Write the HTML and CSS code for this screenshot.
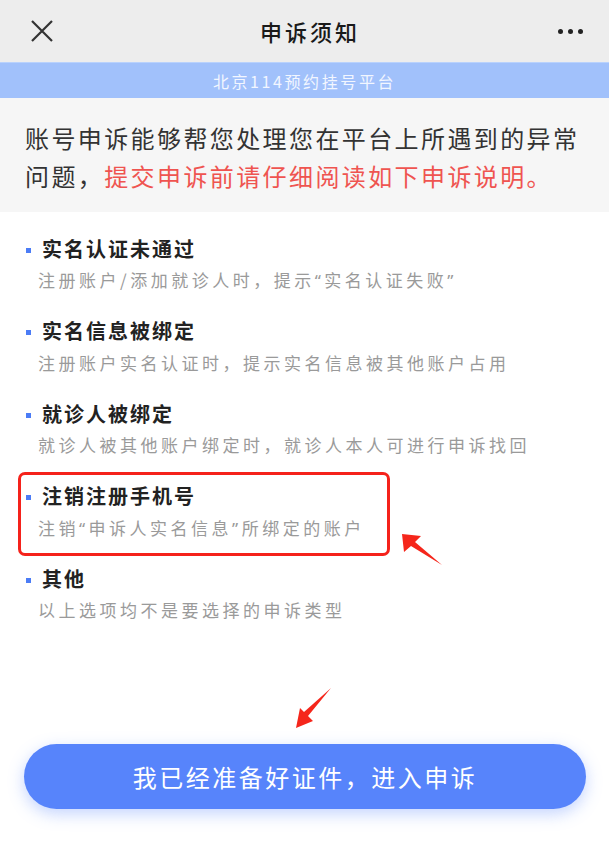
FILE: index.html
```html
<!DOCTYPE html>
<html lang="zh-CN">
<head>
  <meta charset="UTF-8" />
  <title>申诉须知</title>
  <link rel="stylesheet" href="styles.css">
</head>
<body>
  <div class="nav">
    <div class="nav-side">
      <svg class="nav-close" width="24" height="24" viewBox="0 0 24 24">
        <path d="M2 2 L22 22 M22 2 L2 22" stroke="#333" stroke-width="2.2" fill="none" />
      </svg>
    </div>
    <div class="nav-title">申诉须知</div>
    <div class="nav-side nav-more"><span></span><span></span><span></span></div>
  </div>

  <div class="band">北京114预约挂号平台</div>

  <div class="intro">
    账号申诉能够帮您处理您在平台上所遇到的异常问题，<span class="red">提交申诉前请仔细阅读如下申诉说明。</span>
  </div>

  <div class="list">
    <div class="item">
      <div class="item-title"><i class="dot"></i>实名认证未通过</div>
      <div class="item-desc">注册账户/添加就诊人时，提示<span class="q">“</span>实名认证失败<span class="q">”</span></div>
    </div>
    <div class="item">
      <div class="item-title"><i class="dot"></i>实名信息被绑定</div>
      <div class="item-desc">注册账户实名认证时，提示实名信息被其他账户占用</div>
    </div>
    <div class="item">
      <div class="item-title"><i class="dot"></i>就诊人被绑定</div>
      <div class="item-desc">就诊人被其他账户绑定时，就诊人本人可进行申诉找回</div>
    </div>
    <div class="item">
      <div class="mark"></div>
      <svg class="arrow arrow-side" width="46" height="38" viewBox="0 0 46 38">
        <polygon points="4,4 23,6 17,12 44,35 13,16 6,22" fill="#f5261b" />
      </svg>
      <div class="item-title"><i class="dot"></i>注销注册手机号</div>
      <div class="item-desc">注销<span class="q">“</span>申诉人实名信息<span class="q">”</span>所绑定的账户</div>
    </div>
    <div class="item">
      <div class="item-title"><i class="dot"></i>其他</div>
      <div class="item-desc">以上选项均不是要选择的申诉类型</div>
    </div>
  </div>

  <div class="footer">
    <svg class="arrow arrow-down" width="46" height="50" viewBox="0 0 46 50">
      <polygon points="6,45 10,25 14,29 41,5 18,33 23,38" fill="#f5261b" />
    </svg>
    <button class="btn">我已经准备好证件，进入申诉</button>
  </div>
</body>
</html>
```

FILE: styles.css
```css
body {
  margin: 0;
  width: 609px;
  height: 855px;
  overflow: hidden;
  background-color: #ffffff;
  font-family: "Noto Sans CJK SC", "Noto Sans", sans-serif;
  color: #333;
}

.nav {
  height: 62px;
  background-color: #ededed;
  display: flex;
  align-items: center;
  padding: 0 26px 0 30px;
}

.nav-side {
  width: 60px;
  display: flex;
}

.nav-close {
  display: block;
}

.nav-title {
  flex: 1;
  text-align: center;
  font-size: 22px;
  font-weight: 500;
  letter-spacing: 3px;
  color: #1a1a1a;
  padding-left: 7px;
}

.nav-more {
  justify-content: flex-end;
  gap: 5px;
}

.nav-more span {
  width: 5px;
  height: 5px;
  border-radius: 50%;
  background-color: #222;
}

.band {
  height: 36px;
  background-color: #a1c1fb;
  border-top: 1px solid #b9d2fd;
  box-sizing: border-box;
  display: flex;
  align-items: center;
  justify-content: center;
  font-size: 16px;
  letter-spacing: 2.6px;
  color: #f2f6ff;
}

.intro {
  background-color: #f6f6f6;
  height: 114px;
  box-sizing: border-box;
  padding: 21px 20px 0 25px;
  font-size: 24px;
  line-height: 38px;
  letter-spacing: 2.4px;
  color: #333;
}

.red {
  color: #ef5450;
}

.list {
  padding: 12px 0 0 25px;
}

.item {
  position: relative;
  padding: 9px 0 9.5px;
}

.item-title {
  display: flex;
  align-items: center;
  height: 30px;
  font-size: 20px;
  font-weight: 700;
  letter-spacing: 2px;
  color: #222;
}

.dot {
  width: 5px;
  height: 5px;
  background-color: #4b7cf6;
  margin: 4px 11px 0 1px;
}

.item-desc {
  height: 34px;
  line-height: 34px;
  padding-left: 13px;
  font-size: 17px;
  letter-spacing: 3.5px;
  color: #9a9a9a;
}

.q {
  font-family: "Noto Sans", sans-serif;
}

.mark {
  position: absolute;
  left: -7px;
  top: 0;
  width: 372px;
  height: 84px;
  box-sizing: border-box;
  border: 3px solid #f5221b;
  border-radius: 7px;
}

.arrow {
  position: absolute;
}

.arrow-side {
  left: 373px;
  top: 58px;
}

.footer {
  position: relative;
  padding: 107px 23px 0 24px;
}

.arrow-down {
  left: 290px;
  top: 46px;
}

.btn {
  display: block;
  width: 100%;
  height: 65px;
  border: none;
  border-radius: 33px;
  background-color: #5784fb;
  box-shadow: 0 5px 16px rgba(87, 132, 251, 0.35);
  color: #ffffff;
  font-family: "Noto Sans CJK SC", "Noto Sans", sans-serif;
  font-size: 24px;
  letter-spacing: 2.5px;
}
```
